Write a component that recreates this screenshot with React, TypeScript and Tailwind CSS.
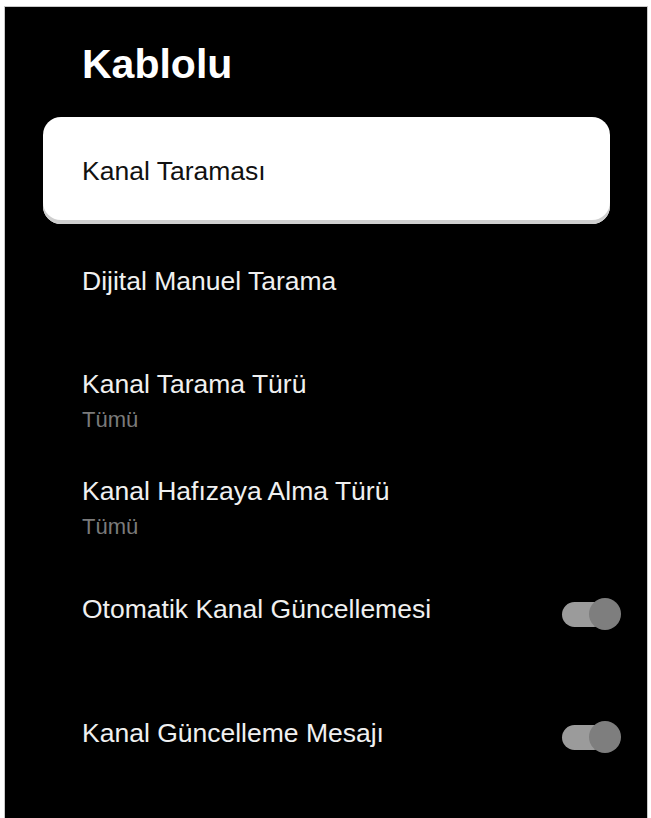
import React from "react";

const FONT = { fontFamily: '"Liberation Sans", Arial, sans-serif' };

function Toggle({ offset }: { offset: string }) {
  return (
    <div className={`relative h-[32px] w-[59px] shrink-0 ${offset}`}>
      <div className="absolute left-0 top-[4px] h-[25px] w-[44px] rounded-full bg-[#9b9b9b]" />
      <div className="absolute right-0 top-0 h-[32px] w-[32px] rounded-full bg-[#7e7e7e]" />
    </div>
  );
}

function TextRow({ title, value, className }: { title: string; value?: string; className: string }) {
  return (
    <div className={`pl-[77px] ${className}`}>
      <div className="text-[26.5px] leading-[32px] text-[#f0f0f0]">{title}</div>
      {value && (
        <div className="mt-[7px] text-[22px] leading-[26px] text-[#7a7a7a]">{value}</div>
      )}
    </div>
  );
}

function ToggleRow({ title, className, offset }: { title: string; className: string; offset: string }) {
  return (
    <div className={`flex items-center justify-between pl-[77px] pr-[26px] ${className}`}>
      <span className="text-[26.5px] leading-[32px] text-[#f0f0f0]">{title}</span>
      <Toggle offset={offset} />
    </div>
  );
}

export default function App() {
  return (
    <div className="h-screen overflow-hidden bg-white pl-[4px] pt-[6px]" style={FONT}>
      <div className="h-[830px] w-[644px] border border-[#c8c8c8] bg-black">
        <h1 className="pl-[77px] pt-[33px] text-[41px] font-bold leading-[48px] text-white">
          Kablolu
        </h1>

        <div className="ml-[38px] mr-[37px] mt-[29px] flex h-[107px] items-center rounded-[18px] bg-white pl-[39px] shadow-[inset_0_-4px_0_#cfcfcf]">
          <span className="text-[26.5px] leading-[32px] text-[#111]">Kanal Taraması</span>
        </div>

        <TextRow title="Dijital Manuel Tarama" className="mt-[41px]" />
        <TextRow title="Kanal Tarama Türü" value="Tümü" className="mt-[71px]" />
        <TextRow title="Kanal Hafızaya Alma Türü" value="Tümü" className="mt-[42px]" />
        <ToggleRow title="Otomatik Kanal Güncellemesi" className="mt-[47px]" offset="mt-[11px]" />
        <ToggleRow title="Kanal Güncelleme Mesajı" className="mt-[83px]" offset="mt-[8px]" />
      </div>
    </div>
  );
}
